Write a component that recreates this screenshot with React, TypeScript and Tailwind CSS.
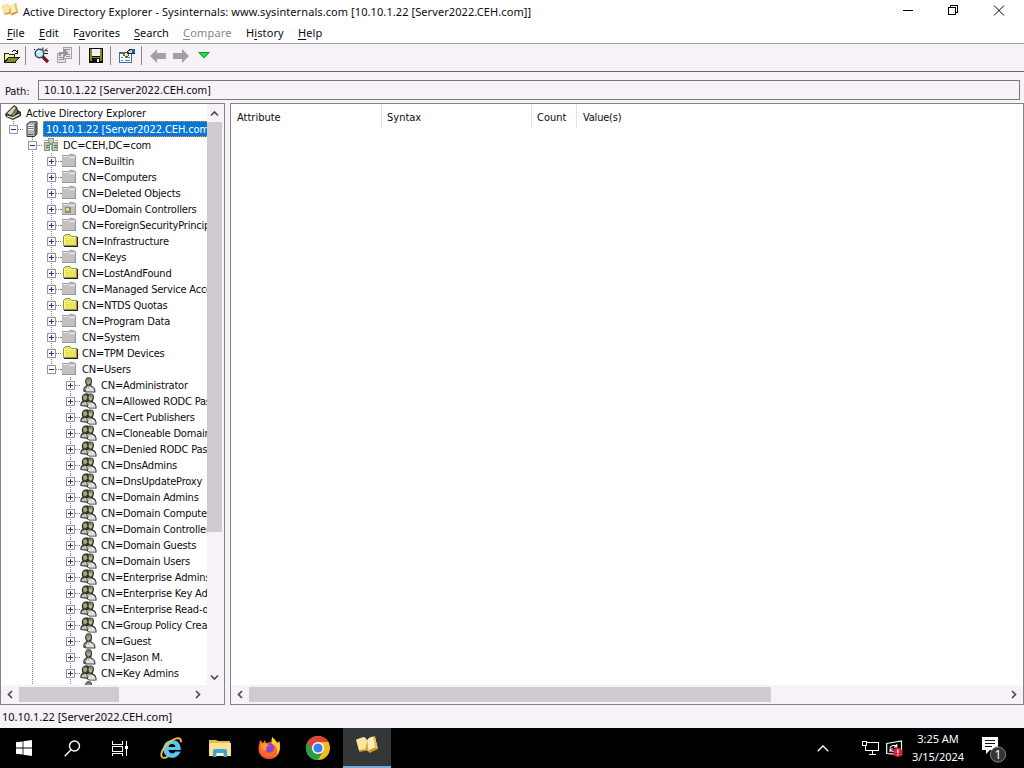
import React from "react";

type Kind = "box" | "folder" | "ou" | "user" | "group" | "server" | "domain";
type Guide = "none" | "line";
interface Row {
  label: string;
  kind: Kind;
  level: number;
  open?: boolean;
  last?: boolean;
}

const containers: Row[] = [
  { label: "CN=Builtin", kind: "box", level: 3 },
  { label: "CN=Computers", kind: "box", level: 3 },
  { label: "CN=Deleted Objects", kind: "box", level: 3 },
  { label: "OU=Domain Controllers", kind: "ou", level: 3 },
  { label: "CN=ForeignSecurityPrincipals", kind: "box", level: 3 },
  { label: "CN=Infrastructure", kind: "folder", level: 3 },
  { label: "CN=Keys", kind: "box", level: 3 },
  { label: "CN=LostAndFound", kind: "folder", level: 3 },
  { label: "CN=Managed Service Accounts", kind: "box", level: 3 },
  { label: "CN=NTDS Quotas", kind: "folder", level: 3 },
  { label: "CN=Program Data", kind: "box", level: 3 },
  { label: "CN=System", kind: "box", level: 3 },
  { label: "CN=TPM Devices", kind: "folder", level: 3 },
  { label: "CN=Users", kind: "box", level: 3, open: true, last: true },
  { label: "CN=Administrator", kind: "user", level: 4 },
  { label: "CN=Allowed RODC Password", kind: "group", level: 4 },
  { label: "CN=Cert Publishers", kind: "group", level: 4 },
  { label: "CN=Cloneable Domain Controllers", kind: "group", level: 4 },
  { label: "CN=Denied RODC Password", kind: "group", level: 4 },
  { label: "CN=DnsAdmins", kind: "group", level: 4 },
  { label: "CN=DnsUpdateProxy", kind: "group", level: 4 },
  { label: "CN=Domain Admins", kind: "group", level: 4 },
  { label: "CN=Domain Computers", kind: "group", level: 4 },
  { label: "CN=Domain Controllers", kind: "group", level: 4 },
  { label: "CN=Domain Guests", kind: "group", level: 4 },
  { label: "CN=Domain Users", kind: "group", level: 4 },
  { label: "CN=Enterprise Admins", kind: "group", level: 4 },
  { label: "CN=Enterprise Key Admins", kind: "group", level: 4 },
  { label: "CN=Enterprise Read-only", kind: "group", level: 4 },
  { label: "CN=Group Policy Creator", kind: "group", level: 4 },
  { label: "CN=Guest", kind: "user", level: 4 },
  { label: "CN=Jason M.", kind: "user", level: 4 },
  { label: "CN=Key Admins", kind: "group", level: 4 },
  { label: "CN=krbtgt", kind: "user", level: 4 },
];

const dot = { stroke: "#808080", strokeDasharray: "1 1", strokeWidth: 1 };

function GuideCell({ type }: { type: Guide }) {
  return (
    <svg className="h-4 w-[19px] shrink-0" viewBox="0 0 19 16" shapeRendering="crispEdges">
      {type === "line" && <path d="M9.5 0V16" {...dot} />}
    </svg>
  );
}

function ToggleCell({ open, last }: { open?: boolean; last?: boolean }) {
  return (
    <svg className="h-4 w-[19px] shrink-0" viewBox="0 0 19 16" shapeRendering="crispEdges" fill="none">
      <path d={last ? "M9.5 0V8" : "M9.5 0V16"} {...dot} />
      <path d="M10 8.5H19" {...dot} />
      <rect x="5.5" y="4.5" width="8" height="8" fill="#fbfbff" stroke="#9593b4" />
      <path d="M7 8.5H12" stroke="#34347c" />
      {!open && <path d="M9.5 6V11" stroke="#34347c" />}
    </svg>
  );
}

function NodeIcon({ kind }: { kind: Kind }) {
  return (
    <svg className="h-4 w-[18px] shrink-0" viewBox="0 0 18 16" fill="none">
      {(kind === "box" || kind === "ou") && (
        <g shapeRendering="crispEdges">
          <path d="M0 8.5H2" {...dot} />
          <path d="M1 2H7L8 1H13L14 2H15V13H1Z" fill="#c3c0c3" />
          <path d="M1 2.5H7M9 1.5H12" stroke="#98959a" />
          <path d="M2 3.5H7M8 4.5H14" stroke="#efebf1" />
          <path d="M14.5 3V13M1 13.5H15" stroke="#9c999d" />
          {kind === "ou" && (
            <>
              <rect x="4" y="6" width="6" height="6" fill="#938f5c" />
              <rect x="5" y="7" width="3" height="3" fill="#ded894" />
            </>
          )}
        </g>
      )}
      {kind === "folder" && (
        <g shapeRendering="crispEdges">
          <path d="M2.5 12.5V3.5L4.5 1.5H8.5L10.5 3.5H15.5V12.5Z" fill="#e8e25a" stroke="#9a9638" />
          <path d="M3 4.5H15M3.5 4V12" stroke="#faf8a8" />
          <path d="M5 6.5H15M5 8.5H15M5 10.5H15" stroke="#f3ee84" strokeDasharray="1 1" />
          <path d="M3 13.5H17M16.5 4V14" stroke="#222" />
        </g>
      )}
      {kind === "server" && (
        <g>
          <path d="M4 3L7 .8H14V13L11.5 15.5H4Z" fill="#b7b5b7" stroke="#333" strokeWidth="1" />
          <path d="M11.5 3L13.7 1.2V13L11.5 15Z" fill="#565456" />
          <path d="M5 4.5H10.5M5 6.5H10.5M5 8.5H10.5" stroke="#f6f6f6" />
          <path d="M5 5.5H10.5M5 7.5H10.5" stroke="#777" />
          <path d="M5 13.5H10.5" stroke="#838" strokeWidth=".8" />
        </g>
      )}
      {kind === "domain" && (
        <g shapeRendering="crispEdges">
          <path d="M5 3H12M8.500 3V7M3 7H15" stroke="#688068" />
          <rect x="6.5" y="1.5" width="5" height="5" fill="#c4d2c0" stroke="#8da08d" />
          <rect x="2.5" y="5.5" width="5" height="8" fill="#bccbb8" stroke="#829882" />
          <rect x="10.5" y="5.5" width="5" height="8" fill="#bccbb8" stroke="#829882" />
          <path d="M4 8.5H7M4 10.5H7M12 8.5H15M12 10.5H15" stroke="#5c6e58" />
          <path d="M9 7V13M2 3.5H6M13 3.5H16" stroke="#96a992" />
        </g>
      )}
      {kind === "user" && (
        <g>
          <path d="M3.500 14.500C2.500 11.500 4.500 9 6.500 8.200C4.500 6.500 4.500 2 7 .5C11 -.5 12.500 1.500 12 5.500C11.700 7 11 7.800 11.500 8.800C14.500 10 16 12.500 15.300 15.500H6Z" fill="#3c3c3c" />
          <path d="M6.300 3C6.300 5 6.700 7.500 8.700 7.500C10.800 7 11 5 10.800 3Z" fill="#b0a888" />
          <path d="M5.800 2.500C7 .8 10.800 .8 11 3L7.500 4.200Z" fill="#82827a" />
          <path d="M5.500 13.500C5.500 10.500 8 9 10 9.300C13 10.200 14.600 12.300 14.300 14.500H6.500Z" fill="#dce0e4" />
          <path d="M6.500 9.300L9.500 8.500L8.500 12Z" fill="#bcb18a" />
          <path d="M4.300 13C4.300 11.500 5 10.300 6 9.800L6 13.500Z" fill="#8c8f92" />
        </g>
      )}
      {kind === "group" && (
        <g>
          <path d="M.5 13C0 10.500 1 8.500 2.500 8C1 5 2 1.200 4.500 .8C6.500 -.3 8 .2 8.500 1C12 -.5 14.500 1.500 13.900 5C13.700 7 12.500 7.800 13 8.800C15.500 9.800 17 12.300 16.500 15.500H9L6.500 13.800Z" fill="#303030" />
          <path d="M3 3C3 6 4 7.500 5.500 7.500L7.500 5L6.500 2Z" fill="#a8a284" />
          <path d="M3 2.800C4 1.500 6 1.300 7 2.300L5 3.600Z" fill="#7c7c76" />
          <path d="M8.500 3.500C8.500 6.500 9.300 7.800 10.700 7.800C12.700 7 12.700 5 12.500 3Z" fill="#c0b283" />
          <path d="M8.300 2.500C9.500 .8 12.500 1 12.500 3L10 3.800Z" fill="#85857e" />
          <path d="M1.300 12.200C1.700 9.500 3.200 8.700 5.800 8.700L7.500 12.500Z" fill="#c6c6b8" />
          <path d="M8 14C7.500 11 9.500 9.400 11.500 9.500C14.500 10.200 16 12.300 15.500 14.700H9.500Z" fill="#dce0e4" />
          <path d="M6.500 9.500L10.500 8.300L8.300 12.500Z" fill="#c4b684" />
        </g>
      )}
    </svg>
  );
}

function TreeRow({ row }: { row: Row }) {
  const guides: Guide[] = row.level === 3 ? ["none", "line"] : ["none", "line", "none"];
  return (
    <div className="flex h-4 shrink-0 items-center pl-1">
      {guides.map((g, i) => (
        <GuideCell key={i} type={g} />
      ))}
      <ToggleCell open={row.open} last={row.last} />
      <NodeIcon kind={row.kind} />
      <span className="ml-[3px] whitespace-nowrap pt-[2px]">{row.label}</span>
    </div>
  );
}

function Chevron({ d }: { d: string }) {
  return (
    <svg className="size-[9px] shrink-0" viewBox="0 0 9 9" fill="none">
      <path d={d} stroke="#4c4a4c" strokeWidth="1.7" />
    </svg>
  );
}
const LEFT = "M6 1L2.500 4.500L6 8";
const RIGHT = "M3 1L6.500 4.500L3 8";
const UP = "M1 6.500L4.500 3L8 6.500";
const DOWN = "M1 2.500L4.500 6L8 2.500";

function Book({ className }: { className: string }) {
  return (
    <svg className={className} viewBox="0 0 24 20" fill="none">
      <path d="M1 5L9 2.500L13 6L20 2L23 14L14.500 18L12 15.500L4.500 17Z" fill="#c99a2e" />
      <path d="M1.200 4.500L8.500 2C10.500 2.500 11.500 4 12 5.500L13.500 16C12 14.500 10 14 8.500 14.200L4 15.500Z" fill="#f8e7a2" />
      <path d="M12 5.500C13 3 16 1.500 19.800 1.500L22.500 12.500C18.500 12.500 15.500 13.800 13.500 16Z" fill="#fbedb8" />
      <path d="M12 5.500L13.500 16L10.500 14Z" fill="#d8a93c" />
      <path d="M18 2L19.800 1.500L22.500 12.500L20 13Z" fill="#e6c05a" />
    </svg>
  );
}

function Separator({ className }: { className: string }) {
  return <div className={"h-[19px] w-px shrink-0 bg-[#8d898d] " + className} />;
}

function Toolbar() {
  return (
    <div className="flex h-[28px] items-center border-t border-[#a09ca0] bg-[#f6f2f7] pb-[4px] pl-[3px]">
      <svg className="h-4 w-[17px] shrink-0" viewBox="0 0 17 16" fill="none" shapeRendering="crispEdges">
        <path d="M1.500 14V6L2.500 5.500H5.500L6.500 6.500H11.500V9" fill="#f4f2a0" stroke="#26260c" />
        <path d="M1.500 14.500L5.500 9.500H16L12 14.500Z" fill="#86852a" stroke="#1c1c06" />
        <path d="M9 3.500H10M10 2.500H13M13 3.500H14M14.500 2V6M12 5.500H15" stroke="#111" />
      </svg>
      <Separator className="ml-[5px]" />
      <svg className="ml-[7px] h-[17px] w-[17px] shrink-0" viewBox="0 0 17 17" fill="none">
        <path d="M9.500 9.500L15 15" stroke="#7c1620" strokeWidth="3.200" />
        <circle cx="6.500" cy="6.500" r="4.300" fill="#b8f0fa" stroke="#28495c" strokeWidth="1.500" />
        <path d="M4 6L6.500 3.500" stroke="#fff" strokeWidth="1.500" />
        <path d="M11 4.500L14 1.500M11.500 6.500H15M10 3V.5M12 3.500L15 4M2 3L1 2" stroke="#161616" />
      </svg>
      <svg className="ml-[6px] h-[17px] w-[18px] shrink-0" viewBox="0 0 18 17" fill="none" shapeRendering="crispEdges">
        <rect x="1.500" y="6.500" width="8" height="9" fill="#e4e1e4" stroke="#a5a2a5" />
        <rect x="7.500" y=".5" width="8" height="11" fill="#e8e5e8" stroke="#a5a2a5" />
        <path d="M3 10.500H8M3 12.500H8M9 2.500H14M10 7.500H14M10 9.500H14" stroke="#969396" />
        <path d="M3 5H8V2L12 6L8 10V7H5V9H3Z" fill="#989598" />
      </svg>
      <Separator className="ml-[5px]" />
      <svg className="ml-[9px] h-[15px] w-[14px] shrink-0" viewBox="0 0 15 15" preserveAspectRatio="none" shapeRendering="crispEdges">
        <path d="M0 0H15V15H1L0 14Z" fill="#0c0c08" />
        <path d="M1 1H3V9H12V1H14V13H1Z" fill="#85842a" />
        <rect x="3" y="1" width="9" height="7" fill="#f3f1f3" />
        <rect x="3" y="10" width="9" height="5" fill="#111" />
        <rect x="9" y="11" width="2" height="3" fill="#eee" />
      </svg>
      <Separator className="ml-[7px]" />
      <svg className="ml-[7px] h-4 w-[18px] shrink-0" viewBox="0 0 18 16" fill="none" shapeRendering="crispEdges">
        <rect x="1.500" y="4.500" width="12" height="10" fill="#fdfdfd" stroke="#416f98" />
        <path d="M3 9.500H5M7 9.500H12M3 12.500H5M7 12.500H12" stroke="#4b8cc4" />
        <path d="M2 5.500H6" stroke="#2f70b0" />
        <path d="M5 7L8 4L11 6L10 8H7Z" fill="#efe19a" stroke="#66592a" />
        <path d="M9 4L12 1.500H16V5.500H14L12 6Z" fill="#b9d8f2" stroke="#22242c" />
        <rect x="14" y="1" width="3" height="4" fill="#1967b3" />
      </svg>
      <Separator className="ml-[5px]" />
      <svg className="ml-[8px] h-[14px] w-4 shrink-0" viewBox="0 0 16 14">
        <path d="M0 7L7 0V4H16V10H7V14Z" fill="#a3a0a4" />
      </svg>
      <svg className="ml-[7px] h-[14px] w-4 shrink-0" viewBox="0 0 16 14">
        <path d="M16 7L9 0V4H0V10H9V14Z" fill="#a3a0a4" />
      </svg>
      <svg className="ml-[9px] h-[7px] w-3 shrink-0" viewBox="0 0 12 7">
        <path d="M.8.5H11.200L6 6Z" fill="#18e33a" stroke="#0b8a20" strokeWidth=".9" />
      </svg>
    </div>
  );
}

function MenuItem({ pre = "", hot, post, className }: { pre?: string; hot: string; post: string; className: string }) {
  return (
    <span className={className}>
      {pre}
      <span className="underline underline-offset-2">{hot}</span>
      {post}
    </span>
  );
}

function Taskbar() {
  return (
    <div className="flex h-10 shrink-0 items-center bg-black text-white">
      <div className="flex w-12 justify-center">
        <svg className="size-4" viewBox="0 0 16 16" fill="#fff">
          <path d="M0 2.300L6.600 1.400V7.600H0ZM7.400 1.300L16 0V7.600H7.400ZM0 8.400H6.600V14.600L0 13.700ZM7.400 8.400H16V16L7.400 14.700Z" />
        </svg>
      </div>
      <div className="flex w-12 justify-center">
        <svg className="size-[17px]" viewBox="0 0 17 17" fill="none" stroke="#fff" strokeWidth="1.400">
          <circle cx="10.500" cy="6" r="5" />
          <path d="M7 9.700L.7 16.200" />
        </svg>
      </div>
      <div className="flex w-12 justify-center pr-px">
        <svg className="size-[17px]" viewBox="0 0 17 17" fill="none" stroke="#fff" shapeRendering="crispEdges">
          <path d="M1.500 1V4.500H11.500V1M1.500 16V13.500H11.500V16M1.500 6.500H11.500V11.500H1.500ZM15.500 1V16" />
          <rect x="14" y="6" width="3" height="3" fill="#fff" stroke="none" />
        </svg>
      </div>
      <div className="flex w-[54px] justify-center pr-px">
        <svg className="h-6 w-6" viewBox="0 0 24 24" fill="none">
          <path d="M21.500 15.500C20 19.500 16.800 21.800 13 21.800C8 21.800 4.300 18 4.300 13C4.300 7.800 8 4 13 4C18.500 4 22 8 21.800 14H9.500C10 16.300 11.300 17.400 13.300 17.400C14.800 17.400 15.800 16.800 16.400 15.500ZM9.600 11H16.500C16.200 9 15 7.900 13.100 7.900C11.200 7.900 10 9 9.600 11Z" fill="#5cc6f2" />
          <path d="M3.500 21.500C-.5 18 7.500 5.500 17 2.600C20.500 1.500 22.500 2.700 21.800 6.300" stroke="#f0c43c" strokeWidth="1.900" />
          <path d="M3.500 21.500C5 22.500 7.500 21.300 9 20.200" stroke="#f0c43c" strokeWidth="1.700" />
        </svg>
      </div>
      <div className="flex w-[42px] justify-center pl-[2px]">
        <svg className="h-[19px] w-[22px]" viewBox="0 0 22 19">
          <path d="M0 1H7L9 2H21V17H0Z" fill="#e9b94c" />
          <path d="M1 4H22V17H0V5Z" fill="#fbe08e" />
          <path d="M4 18V12Q4 10 6 10H16Q18 10 18 12V18H14.500V14H7.500V18Z" fill="#3aa5d4" />
          <path d="M7.500 14H14.500V17H7.500Z" fill="#fff4cc" />
        </svg>
      </div>
      <div className="flex w-[57px] justify-center">
        <svg className="size-6" viewBox="0 0 24 24">
          <path d="M2 9L3 4L6 7L8 4L9 7L14 6L15 1C18 3 19 6 21 7L22 5C24 10 24 23 12 23C4 23 0 16 2 9Z" fill="#ff6b25" />
          <path d="M15 1C18 3 19 6 21 7L22 5C23.500 9 23.500 15 20 19C21 13 19 9 15 8Z" fill="#ffcc36" />
          <path d="M2 11C3 21 11 23 17 21C12 25 1 21 2 11Z" fill="#f42e63" />
          <circle cx="12.500" cy="12" r="4.700" fill="#8b45d4" />
          <path d="M4 8C8 6 11 8 12 10C10 10 8 12 10 14C5 16 4 12 4 8Z" fill="#ff9a28" />
        </svg>
      </div>
      <div className="flex w-[46px] justify-center pr-[5px]">
        <svg className="size-6" viewBox="0 0 24 24">
          <circle cx="12" cy="12" r="12" fill="#f2bd1c" />
          <path d="M12 6H22.400A12 12 0 0 0 1.600 6L6.800 15Z" fill="#dc4437" />
          <path d="M1.600 6A12 12 0 0 0 12 24L17.200 15H6.800Z" fill="#2a9c4e" />
          <circle cx="12" cy="12" r="6" fill="#fff" />
          <circle cx="12" cy="12" r="4.600" fill="#3d7fe8" />
        </svg>
      </div>
      <div className="flex h-10 w-12 justify-center border-b-2 border-[#76aede] bg-[#343638] pt-[7px]">
        <Book className="h-5 w-6" />
      </div>
      <div className="grow" />
      <svg className="h-[7px] w-3 shrink-0" viewBox="0 0 12 7" fill="none">
        <path d="M.7 6.300L6 1L11.300 6.300" stroke="#fff" strokeWidth="1.300" />
      </svg>
      <svg className="ml-[33px] h-[14px] w-[17px] shrink-0" viewBox="0 0 17 14" fill="none" stroke="#fff" shapeRendering="crispEdges">
        <path d="M5 1.500H16.500V9.500H3.500V5M10.500 10V13M7 13.500H14" />
        <rect x=".5" y=".5" width="4" height="4" />
      </svg>
      <svg className="ml-[7px] h-[17px] w-[17px] shrink-0" viewBox="0 0 17 17" fill="none">
        <path d="M.7 3.500L15.500 1V14.500L.7 13.500Z" stroke="#fff" strokeWidth="1.200" />
        <path d="M4 8C4.500 5.500 9 4.500 10.500 6.500M10.800 4V7H8M4 12V9H7M4.500 10C6 12 8 11.500 8.500 10.500" stroke="#fff" strokeWidth="1.100" />
        <circle cx="11.800" cy="12.300" r="4.600" fill="#d9232e" />
        <path d="M11.800 9.500V13M11.800 14V15.300" stroke="#fff" strokeWidth="1.300" />
      </svg>
      <div className="ml-[3px] flex w-[64px] shrink-0 flex-col items-center text-[11px] leading-[18px]">
        <span>3:25 AM</span>
        <span>3/15/2024</span>
      </div>
      <div className="ml-3 mr-[18px] flex w-[24px] shrink-0">
        <svg className="h-[26px] w-6 overflow-visible" viewBox="0 0 24 26" fill="none">
          <path d="M0 2H16V15H8L4 19V15H0Z" fill="#fff" />
          <path d="M3 5.500H13M3 8.500H13M3 11.500H10" stroke="#111" />
          <circle cx="16" cy="19.500" r="7.600" fill="#333536" stroke="#818384" />
          <text x="16" y="24" textAnchor="middle" fontSize="12" fill="#fff">1</text>
        </svg>
      </div>
    </div>
  );
}

export default function App() {
  return (
    <div className="flex h-[768px] w-[1024px] flex-col overflow-hidden bg-[#f6f2f7] font-['Noto_Sans',sans-serif] text-[11px] text-[#0c0a10]">
      <header className="flex h-[22px] shrink-0 items-center bg-white">
        <Book className="mb-[3px] ml-px h-[15px] w-[18px]" />
        <span className="ml-1 whitespace-nowrap pt-[2px] tracking-[0.084px]">
          Active Directory Explorer - Sysinternals: www.sysinternals.com [10.10.1.22 [Server2022.CEH.com]]
        </span>
        <svg className="ml-auto mr-[18px] h-[13px] w-[104px]" viewBox="0 0 104 13" fill="none" stroke="#000">
          <path d="M1 5.500H11" shapeRendering="crispEdges" />
          <path d="M46.500 2.500H53.500V9.500H46.500ZM48.500 2.500V.5H55.500V7.500H53.500" shapeRendering="crispEdges" />
          <path d="M92 .5L102 10.500M102 .5L92 10.500" />
        </svg>
      </header>
      <nav className="flex h-[21px] shrink-0 items-center bg-white pl-[7px] pt-[2px]">
        <MenuItem className="w-8" hot="F" post="ile" />
        <MenuItem className="w-[34px]" hot="E" post="dit" />
        <MenuItem className="w-[61px]" pre="F" hot="a" post="vorites" />
        <MenuItem className="w-[49px]" hot="S" post="earch" />
        <MenuItem className="w-[63px] tracking-[0.2px] text-[#8a868a]" hot="C" post="ompare" />
        <MenuItem className="w-[52px] tracking-[0.1px]" pre="H" hot="i" post="story" />
        <MenuItem className="tracking-[0.1px]" hot="H" post="elp" />
      </nav>
      <Toolbar />
      <div className="flex h-8 shrink-0 items-start border-t border-[#67636a] pt-2 font-['DejaVu_Sans_Condensed','DejaVu_Sans',sans-serif] tracking-[-0.1px]">
        <span className="w-[38px] pl-[5px] pt-1">Path:</span>
        <div className="mr-1 flex h-5 grow items-center border border-[#7b777d] pl-[5px] pt-[2px]">10.10.1.22 [Server2022.CEH.com]</div>
      </div>
      <main className="flex h-[602px] shrink-0 gap-[5px] font-['DejaVu_Sans_Condensed','DejaVu_Sans',sans-serif] tracking-[-0.2px]">
        <section className="flex w-[225px] flex-col border border-[#85818a] bg-white">
          <div className="flex h-[581px] shrink-0">
            <div className="flex w-[206px] flex-col overflow-hidden pt-px">
              <div className="flex h-4 shrink-0 items-center pl-1">
                <svg className="h-4 w-[18px] shrink-0" viewBox="0 0 18 16">
                  <path d="M0 9L9 0L12 2L13 5L16 7V11L8 15L1 12Z" fill="#34332c" />
                  <path d="M2 8.500L9 1.500L11 3L6 10Z" fill="#d8d5b4" />
                  <path d="M6.500 10L11.500 4L12 7L8.500 11Z" fill="#8f8c62" />
                  <path d="M2 10.500L8 12L14.500 8.500V10L8 13.500L2 11.500Z" fill="#f2f0e4" />
                </svg>
                <span className="ml-[3px] whitespace-nowrap pt-[2px] tracking-[-0.15px]">Active Directory Explorer</span>
              </div>
              <div className="flex h-4 shrink-0 items-center pl-[3px]">
                <ToggleCell open last />
                <NodeIcon kind="server" />
                <span className="ml-[2px] flex h-4 grow items-center overflow-hidden whitespace-nowrap border border-r-0 border-dotted border-[#e0913c] bg-[#0877d4] pl-[2px] pt-[2px] tracking-[-0.1px] text-white">
                  10.10.1.22 [Server2022.CEH.com]
                </span>
              </div>
              <div className="flex h-4 shrink-0 items-center pl-[3px]">
                <GuideCell type="none" />
                <ToggleCell open />
                <NodeIcon kind="domain" />
                <span className="ml-[3px] whitespace-nowrap pt-[2px]">DC=CEH,DC=com</span>
              </div>
              <div className="-ml-px flex flex-col">
                {containers.map((row) => (
                  <TreeRow key={row.label} row={row} />
                ))}
              </div>
            </div>
            <div className="flex w-[17px] flex-col items-start bg-[#f6f2f7]">
              <div className="flex h-[18px] items-center pl-[3px]">
                <Chevron d={UP} />
              </div>
              <div className="h-[410px] w-[15px] bg-[#cdcbcd]" />
              <div className="flex grow items-end pb-[3px] pl-[3px]">
                <Chevron d={DOWN} />
              </div>
            </div>
          </div>
          <div className="flex grow items-center bg-[#f6f2f7] pb-px pl-[5px]">
            <Chevron d={LEFT} />
            <div className="ml-1 h-[15px] w-[100px] bg-[#cdcbcd]" />
            <div className="ml-[74px] flex">
              <Chevron d={RIGHT} />
            </div>
          </div>
        </section>
        <section className="flex grow flex-col border border-[#85818a] bg-white">
          <div className="flex h-6 items-stretch leading-[28px]">
            <span className="w-[151px] border-r border-[#e4e1e4] pl-[6px] tracking-[0px]">Attribute</span>
            <span className="w-[150px] border-r border-[#e4e1e4] pl-[5px] tracking-[0px]">Syntax</span>
            <span className="w-[45px] border-r border-[#e4e1e4] pl-[5px] tracking-[0px]">Count</span>
            <span className="pl-[6px]">Value(s)</span>
          </div>
          <div className="grow" />
          <div className="flex h-[19px] items-center bg-[#f6f2f7] pb-px pl-[5px] pr-[5px]">
            <Chevron d={LEFT} />
            <div className="ml-1 mr-auto h-[15px] w-[522px] bg-[#cdcbcd]" />
            <Chevron d={RIGHT} />
          </div>
        </section>
      </main>
      <footer className="flex h-[23px] shrink-0 items-center pl-[2px] pt-[2px]">10.10.1.22 [Server2022.CEH.com]</footer>
      <Taskbar />
    </div>
  );
}
